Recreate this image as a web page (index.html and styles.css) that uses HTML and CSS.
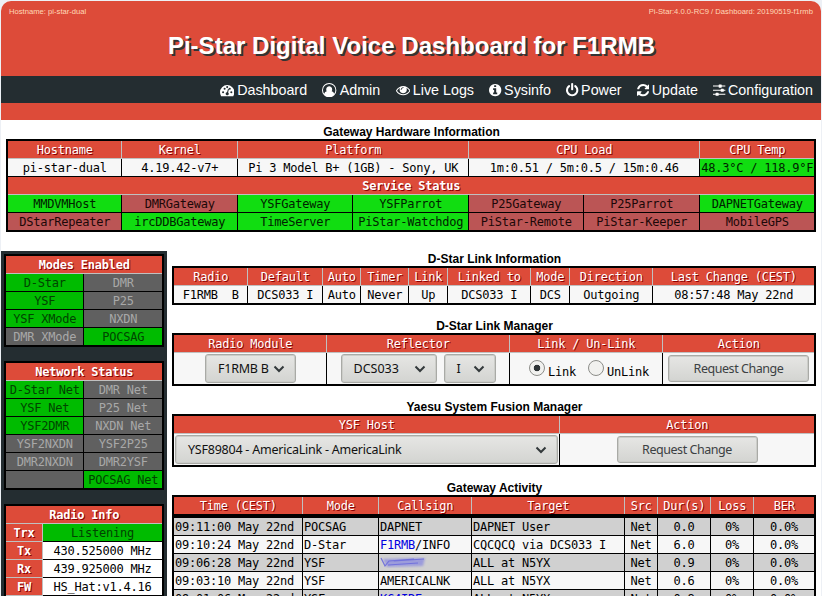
FILE: index.html
```html
<!DOCTYPE html>
<html lang="en">
<head>
<meta charset="utf-8">
<title>Pi-Star Digital Voice Dashboard</title>
<link rel="stylesheet" href="styles.css">
</head>
<body>
<div class="container">
  <header class="header">
    <div class="meta"><span>Hostname: pi-star-dual</span><span>Pi-Star:4.0.0-RC9 / Dashboard: 20190519-f1rmb</span></div>
    <h1>Pi-Star Digital Voice Dashboard for F1RMB</h1>
  </header>
  <nav class="nav">
    <a><svg class="w14" viewBox="0 0 1792 1792"><path fill-rule="evenodd" d="M896 256A896 896 0 0 0 0 1152q0 261 141 483 19 29 54 29h1402q35 0 54-29 141-221 141-483A896 896 0 0 0 896 256zM384 1152m-128 0a128 128 0 1 0 256 0a128 128 0 1 0-256 0zM576 704m-128 0a128 128 0 1 0 256 0a128 128 0 1 0-256 0zM896 512m-128 0a128 128 0 1 0 256 0a128 128 0 1 0-256 0zM1216 704m-128 0a128 128 0 1 0 256 0a128 128 0 1 0-256 0zM1408 1152m-128 0a128 128 0 1 0 256 0a128 128 0 1 0-256 0zM1004 1185L1105 803q6-26-7-48t-38-29-48 6-30 39L881 1153q-60 5-107 43.5t-63 98.5q-20 77 20 146t117 89 146-20 89-117q16-60-6-117t-73-91z"/></svg>Dashboard</a>
    <a><svg class="w14" viewBox="0 0 1792 1792"><path d="M896 0A896 896 0 1 1 896 1792A896 896 0 0 1 896 0zM1515 1351A768 768 0 1 0 277 1351Q350 1060 591 1024A360 400 0 1 1 1201 1024Q1442 1060 1515 1351z" fill-rule="evenodd"/></svg>Admin</a>
    <a><svg class="w14" viewBox="0 0 1792 1792"><path d="M1664 960q-152-236-381-353 61 104 61 225 0 185-131.5 316.5t-316.5 131.5-316.5-131.5-131.5-316.5q0-121 61-225-229 117-381 353 133 205 333.5 326.5t434.5 121.5 434.5-121.5 333.5-326.5zm-720-384q0-20-14-34t-34-14q-125 0-214.5 89.5t-89.5 214.5q0 20 14 34t34 14 34-14 14-34q0-86 61-147t147-61q20 0 34-14t14-34zm848 384q0 34-20 69-140 230-376.5 368.5t-499.5 138.5-499.5-139-376.5-368q-20-35-20-69t20-69q140-229 376.5-368t499.5-139 499.5 139 376.5 368q20 35 20 69z"/></svg>Live Logs</a>
    <a><svg class="w12" viewBox="128 0 1536 1792"><path d="M1152 1376v-160q0-14-9-23t-23-9h-96v-512q0-14-9-23t-23-9h-320q-14 0-23 9t-9 23v160q0 14 9 23t23 9h96v320h-96q-14 0-23 9t-9 23v160q0 14 9 23t23 9h448q14 0 23-9t9-23zm-128-896v-160q0-14-9-23t-23-9h-192q-14 0-23 9t-9 23v160q0 14 9 23t23 9h192q14 0 23-9t9-23zm640 416q0 209-103 385.5t-279.5 279.5-385.5 103-385.5-103-279.5-279.5-103-385.5 103-385.5 279.5-279.5 385.5-103 385.5 103 279.5 279.5 103 385.5z"/></svg>Sysinfo</a>
    <a><svg class="w12" viewBox="128 0 1536 1792"><path d="M1664 896q0 156-61 298t-164 245-245 164-298 61-298-61-245-164-164-245-61-298q0-182 80.5-343t226.5-270q43-32 95.5-25t83.5 50q32 42 24.5 94.5t-49.5 84.5q-98 74-151.5 181t-53.5 228q0 104 40.5 198.5t109.5 163.5 163.5 109.5 198.5 40.5 198.5-40.5 163.5-109.5 109.5-163.5 40.5-198.5q0-121-53.5-228t-151.5-181q-42-32-49.5-84.5t24.5-94.5q31-43 84-50t95 25q146 109 226.5 270t80.5 343zm-640-768v640q0 52-38 90t-90 38-90-38-38-90v-640q0-52 38-90t90-38 90 38 38 90z"/></svg>Power</a>
    <a><svg class="w12" viewBox="128 0 1536 1792"><path d="M1639 1056q0 5-1 7-64 268-268 434.5t-478 166.5q-146 0-282.5-55t-243.5-157l-129 129q-19 19-45 19t-45-19-19-45v-448q0-26 19-45t45-19h448q26 0 45 19t19 45-19 45l-137 137q71 66 161 102t187 36q134 0 250-65t186-179q11-17 53-117 8-23 30-23h192q13 0 22.5 9.5t9.5 22.5zm25-800v448q0 26-19 45t-45 19h-448q-26 0-45-19t-19-45 19-45l138-138q-148-137-349-137-134 0-250 65t-186 179q-11 17-53 117-8 23-30 23h-199q-13 0-22.5-9.5t-9.5-22.5v-7q65-268 270-434.5t480-166.5q146 0 284 55.5t245 156.5l130-129q19-19 45-19t45 19 19 45z"/></svg>Update</a>
    <a><svg class="w12" viewBox="128 0 1536 1792"><path d="M128 320h704v128H128zM1216 320h448v128h-448zM832 256q0-64 64-64h256q64 0 64 64v256q0 64-64 64H896q-64 0-64-64zM128 832h960v128H128zM1472 832h192v128h-192zM1088 768q0-64 64-64h256q64 0 64 64v256q0 64-64 64h-256q-64 0-64-64zM128 1344h320v128H128zM832 1344h832v128H832zM448 1280q0-64 64-64h256q64 0 64 64v256q0 64-64 64H512q-64 0-64-64z"/></svg>Configuration</a>
  </nav>

  <section class="hardware">
    <h2>Gateway Hardware Information</h2>
    <div class="table">
      <div class="row th hw"><b>Hostname</b><b>Kernel</b><b>Platform</b><b>CPU Load</b><b>CPU Temp</b></div>
      <div class="row hw"><i>pi-star-dual</i><i>4.19.42-v7+</i><i>Pi 3 Model B+ (1GB) - Sony, UK</i><i>1m:0.51 / 5m:0.5 / 15m:0.46</i><i class="on">48.3°C / 118.9°F</i></div>
      <div class="row th strong sep"><b>Service Status</b></div>
      <div class="row svc"><i class="on">MMDVMHost</i><i class="bad">DMRGateway</i><i class="on">YSFGateway</i><i class="on">YSFParrot</i><i class="bad">P25Gateway</i><i class="bad">P25Parrot</i><i class="on">DAPNETGateway</i></div>
      <div class="row svc sep"><i class="bad">DStarRepeater</i><i class="on">ircDDBGateway</i><i class="on">TimeServer</i><i class="on">PiStar-Watchdog</i><i class="bad">PiStar-Remote</i><i class="bad">PiStar-Keeper</i><i class="bad">MobileGPS</i></div>
    </div>
  </section>

  <div class="body">
    <aside class="side">
      <div class="table">
        <div class="row th strong"><b>Modes Enabled</b></div>
        <div class="grid2">
          <i class="up">D-Star</i><i class="off">DMR</i>
          <i class="up">YSF</i><i class="off">P25</i>
          <i class="up">YSF XMode</i><i class="off">NXDN</i>
          <i class="off">DMR XMode</i><i class="up">POCSAG</i>
        </div>
      </div>
      <div class="table">
        <div class="row th strong"><b>Network Status</b></div>
        <div class="grid2">
          <i class="up">D-Star Net</i><i class="off">DMR Net</i>
          <i class="up">YSF Net</i><i class="off">P25 Net</i>
          <i class="up">YSF2DMR</i><i class="off">NXDN Net</i>
          <i class="off">YSF2NXDN</i><i class="off">YSF2P25</i>
          <i class="off">DMR2NXDN</i><i class="off">DMR2YSF</i>
          <i class="off"></i><i class="up">POCSAG Net</i>
        </div>
      </div>
      <div class="table">
        <div class="row th strong"><b>Radio Info</b></div>
        <div class="radio-info">
          <div class="labels"><b>Trx</b><b>Tx</b><b>Rx</b><b>FW</b><b></b></div>
          <div class="values"><i class="up">Listening</i><i>430.525000 MHz</i><i>439.925000 MHz</i><i>HS_Hat:v1.4.16</i><i></i></div>
        </div>
      </div>
    </aside>

    <main class="main">
      <section>
        <h2>D-Star Link Information</h2>
        <div class="table">
          <div class="row th link"><b>Radio</b><b>Default</b><b>Auto</b><b>Timer</b><b>Link</b><b>Linked to</b><b>Mode</b><b>Direction</b><b>Last Change (CEST)</b></div>
          <div class="row link"><i>F1RMB  B</i><i>DCS033 I</i><i>Auto</i><i>Never</i><i>Up</i><i>DCS033 I</i><i>DCS</i><i>Outgoing</i><i>08:57:48 May 22nd</i></div>
        </div>
      </section>
      <section>
        <h2>D-Star Link Manager</h2>
        <div class="table">
          <div class="row th manager"><b>Radio Module</b><b>Reflector</b><b>Link / Un-Link</b><b>Action</b></div>
          <div class="row tall manager">
            <i><span class="select module">F1RMB B<svg viewBox="0 0 12 8"><path d="M1.5 1.5L6 6L10.500 1.500"/></svg></span></i>
            <i class="pair"><span class="select reflector">DCS033<svg viewBox="0 0 12 8"><path d="M1.5 1.5L6 6L10.500 1.500"/></svg></span><span class="select letter">I<svg viewBox="0 0 12 8"><path d="M1.5 1.5L6 6L10.500 1.500"/></svg></span></i>
            <i class="radios"><span class="radio checked"></span><span class="label">Link</span><span class="radio"></span><span class="label">UnLink</span></i>
            <i><button>Request Change</button></i>
          </div>
        </div>
      </section>
      <section>
        <h2>Yaesu System Fusion Manager</h2>
        <div class="table">
          <div class="row th ysf"><b>YSF Host</b><b>Action</b></div>
          <div class="row tall ysf">
            <i><span class="select host">YSF89804 - AmericaLink - AmericaLink<svg viewBox="0 0 12 8"><path d="M1.5 1.5L6 6L10.500 1.500"/></svg></span></i>
            <i><button>Request Change</button></i>
          </div>
        </div>
      </section>
      <section>
        <h2>Gateway Activity</h2>
        <div class="table activity">
          <div class="row th act"><b>Time (CEST)</b><b>Mode</b><b>Callsign</b><b>Target</b><b>Src</b><b>Dur(s)</b><b>Loss</b><b>BER</b></div>
          <div class="row act alt"><i>09:11:00 May 22nd</i><i>POCSAG</i><i>DAPNET</i><i>DAPNET User</i><i>Net</i><i>0.0</i><i>0%</i><i>0.0%</i></div>
          <div class="row act"><i>09:10:24 May 22nd</i><i>D-Star</i><i><a>F1RMB</a>/INFO</i><i>CQCQCQ via DCS033 I</i><i>Net</i><i>6.0</i><i>0%</i><i>0.0%</i></div>
          <div class="row act alt"><i>09:06:28 May 22nd</i><i>YSF</i><i><svg class="smudge" viewBox="0 0 47 11"><path class="haze" d="M3 2L45 1L43 9L7 10Z"/><path class="stroke" d="M1 1L5 9L9 4L34 2M8 8L38 6M14 4L44 2"/></svg></i><i>ALL at N5YX</i><i>Net</i><i>0.9</i><i>0%</i><i>0.0%</i></div>
          <div class="row act"><i>09:03:10 May 22nd</i><i>YSF</i><i>AMERICALNK</i><i>ALL at N5YX</i><i>Net</i><i>0.6</i><i>0%</i><i>0.0%</i></div>
          <div class="row act alt"><i>09:01:06 May 22nd</i><i>YSF</i><i><a>KC4IRE</a></i><i>ALL at N5YX</i><i>Net</i><i>0.8</i><i>0%</i><i>0.0%</i></div>
        </div>
      </section>
    </main>
  </div>
</div>
</body>
</html>
```
FILE: styles.css
```css
* { box-sizing: border-box; }
html, body { height: 100%; overflow: hidden; }
body {
  margin: 0;
  padding: 1px 1px 0;
  background: #edf0f5;
  font-family: "Liberation Sans", Arial, sans-serif;
  color: #000;
}
.container {
  height: 620px;
  background: #fff;
  border-radius: 10px 10px 0 0;
  overflow: hidden;
}
.header { height: 75px; background: #dd4b39; color: #fff; }
.meta {
  display: flex;
  justify-content: space-between;
  padding: 6px 8px 0;
  font-size: 7.65px;
  line-height: 9px;
  color: #ffd9b8;
}
h1 {
  margin: 16px 0 0;
  padding-left: 1px;
  text-align: center;
  font-size: 24.05px;
  line-height: 27px;
  text-shadow: 2px 2px #333;
}
.nav {
  display: flex;
  justify-content: flex-end;
  gap: 15.4px;
  height: 44px;
  padding-right: 8px;
  background: #242d31;
  border-bottom: 17px solid #dd4b39;
  color: #fff;
  font-size: 14.3px;
  line-height: 28px;
}
.nav a { display: flex; }
.nav svg { height: 14.4px; margin: 7px 2.4px 0 0; fill: #fff; }
.nav .w14 { width: 14.4px; margin-right: 2.8px; }
.w12 { width: 12.34px; }

h2 {
  margin: 0;
  height: 14px;
  padding-left: 1px;
  text-align: center;
  font-size: 12px;
  line-height: 14px;
}
.hardware { padding: 5px 5px 19px; }

.table {
  border: 2px solid #000;
  background: #000;
  font-family: "DejaVu Sans Mono", monospace;
  font-size: 12px;
  line-height: 17px;
  letter-spacing: -0.224px;
}
.row { display: grid; gap: 1px; }
.table i, .table b {
  height: 17px;
  padding-top: 1px;
  overflow: hidden;
  font-style: normal;
  font-weight: normal;
  text-align: center;
  white-space: pre;
}
.table i { background: #f7f7f7; }
.table b {
  background: #dd4b39;
  color: #fff;
  text-shadow: 1px 1px #8b0000;
}
.th { background: #c0c0c0; border-bottom: 1px solid #c0c0c0; }
.table .strong b, .table .labels b { font-weight: bold; }
.sep { margin-top: 1px; }
.table .on { background: #11dd11; color: #002200; }
.table .bad { background: #bb5555; color: #1c0808; }
.table .up { background: #00bb00; color: #004400; }
.table .off { background: #606060; color: #a8a8a8; }

.hw { grid-template-columns: 113px 115px 230px 230px 114px; }
.svc { grid-template-columns: 113px 115px 114px 115px 114px 115px 114px; }
.hw i, .svc i, .th b, .link i, .grid2 i { padding-left: 0.5px; }

.body { display: flex; }
.side {
  display: flex;
  flex-direction: column;
  gap: 14px;
  width: 166px;
  height: 370px;
  padding: 3px 3px 0;
  background: #242d31;
}
.side .table { flex: none; }
.grid2 { display: grid; grid-template-columns: 77px 78px; gap: 1px; }
.radio-info { display: grid; grid-template-columns: 37px 119px; }
.labels, .values { display: grid; gap: 1px; }
.labels { background: #c0c0c0; border-right: 1px solid #c0c0c0; }
.values i { background: #fff; }

.main {
  display: flex;
  flex-direction: column;
  gap: 14px;
  width: 644px;
  margin-left: 5px;
  padding-top: 1px;
}
.link { grid-template-columns: 73px 74px 37px 47px 38px 82px 38px 82px 161px; }
.manager { grid-template-columns: 152px 182px 152px 151px; }
.ysf { grid-template-columns: 385px 254px; }
.act { grid-template-columns: 128px 75px 92px 152px 32px 52px 42px 60px; }

.table .tall i {
  display: flex;
  align-items: center;
  justify-content: center;
  height: 31px;
  padding-top: 0;
}
.select, button {
  border: 1px solid #a9aaa6;
  border-radius: 3px;
  background: linear-gradient(#e6e6e4, #d3d4d1);
  box-shadow: inset 0 0 0 1px #cccdc9;
  font-family: "Noto Sans", sans-serif;
  font-size: 12.5px;
  letter-spacing: -0.23px;
}
.select {
  display: flex;
  align-items: center;
  justify-content: space-between;
  height: 29px;
  padding: 0 10px 0 12px;
  color: #111;
}
.select svg {
  width: 12px;
  height: 8px;
  fill: none;
  stroke: #33393b;
  stroke-width: 2;
}
.module { width: 91px; margin-left: 1px; }
.table .pair { gap: 7px; }
.reflector { width: 96px; letter-spacing: 0; }
.letter { width: 52px; }
.host { width: 383px; }
button {
  width: 141px;
  height: 27px;
  padding: 0;
  letter-spacing: -0.45px;
  color: #3c4143;
}
.table .tall .radios { justify-content: flex-start; padding-left: 19px; }
.radio {
  width: 16px;
  height: 16px;
  margin-top: -1px;
  border: 1px solid #8c8d89;
  border-radius: 50%;
  background: #f1f1ef;
}
.checked { background: radial-gradient(circle, #2e3436 3px, #f1f1ef 3.6px); }
.label { margin: 7px 12px 0 3px; }

.activity .th { border-bottom: 4px solid #000; }
.act + .act { margin-bottom: 1px; }
.table .act:not(.th) i:nth-child(-n+4) { text-align: left; padding-left: 1px; }
.table .alt i { background: #d0d0d0; }
.act a { color: #0000e0; }
.smudge { display: block; width: 47px; height: 11px; margin-top: 2px; }
.haze { fill: #9c9cdb; filter: blur(1px); }
.stroke { fill: none; stroke: #7272dc; stroke-width: 1.2; filter: blur(0.6px); }
```
